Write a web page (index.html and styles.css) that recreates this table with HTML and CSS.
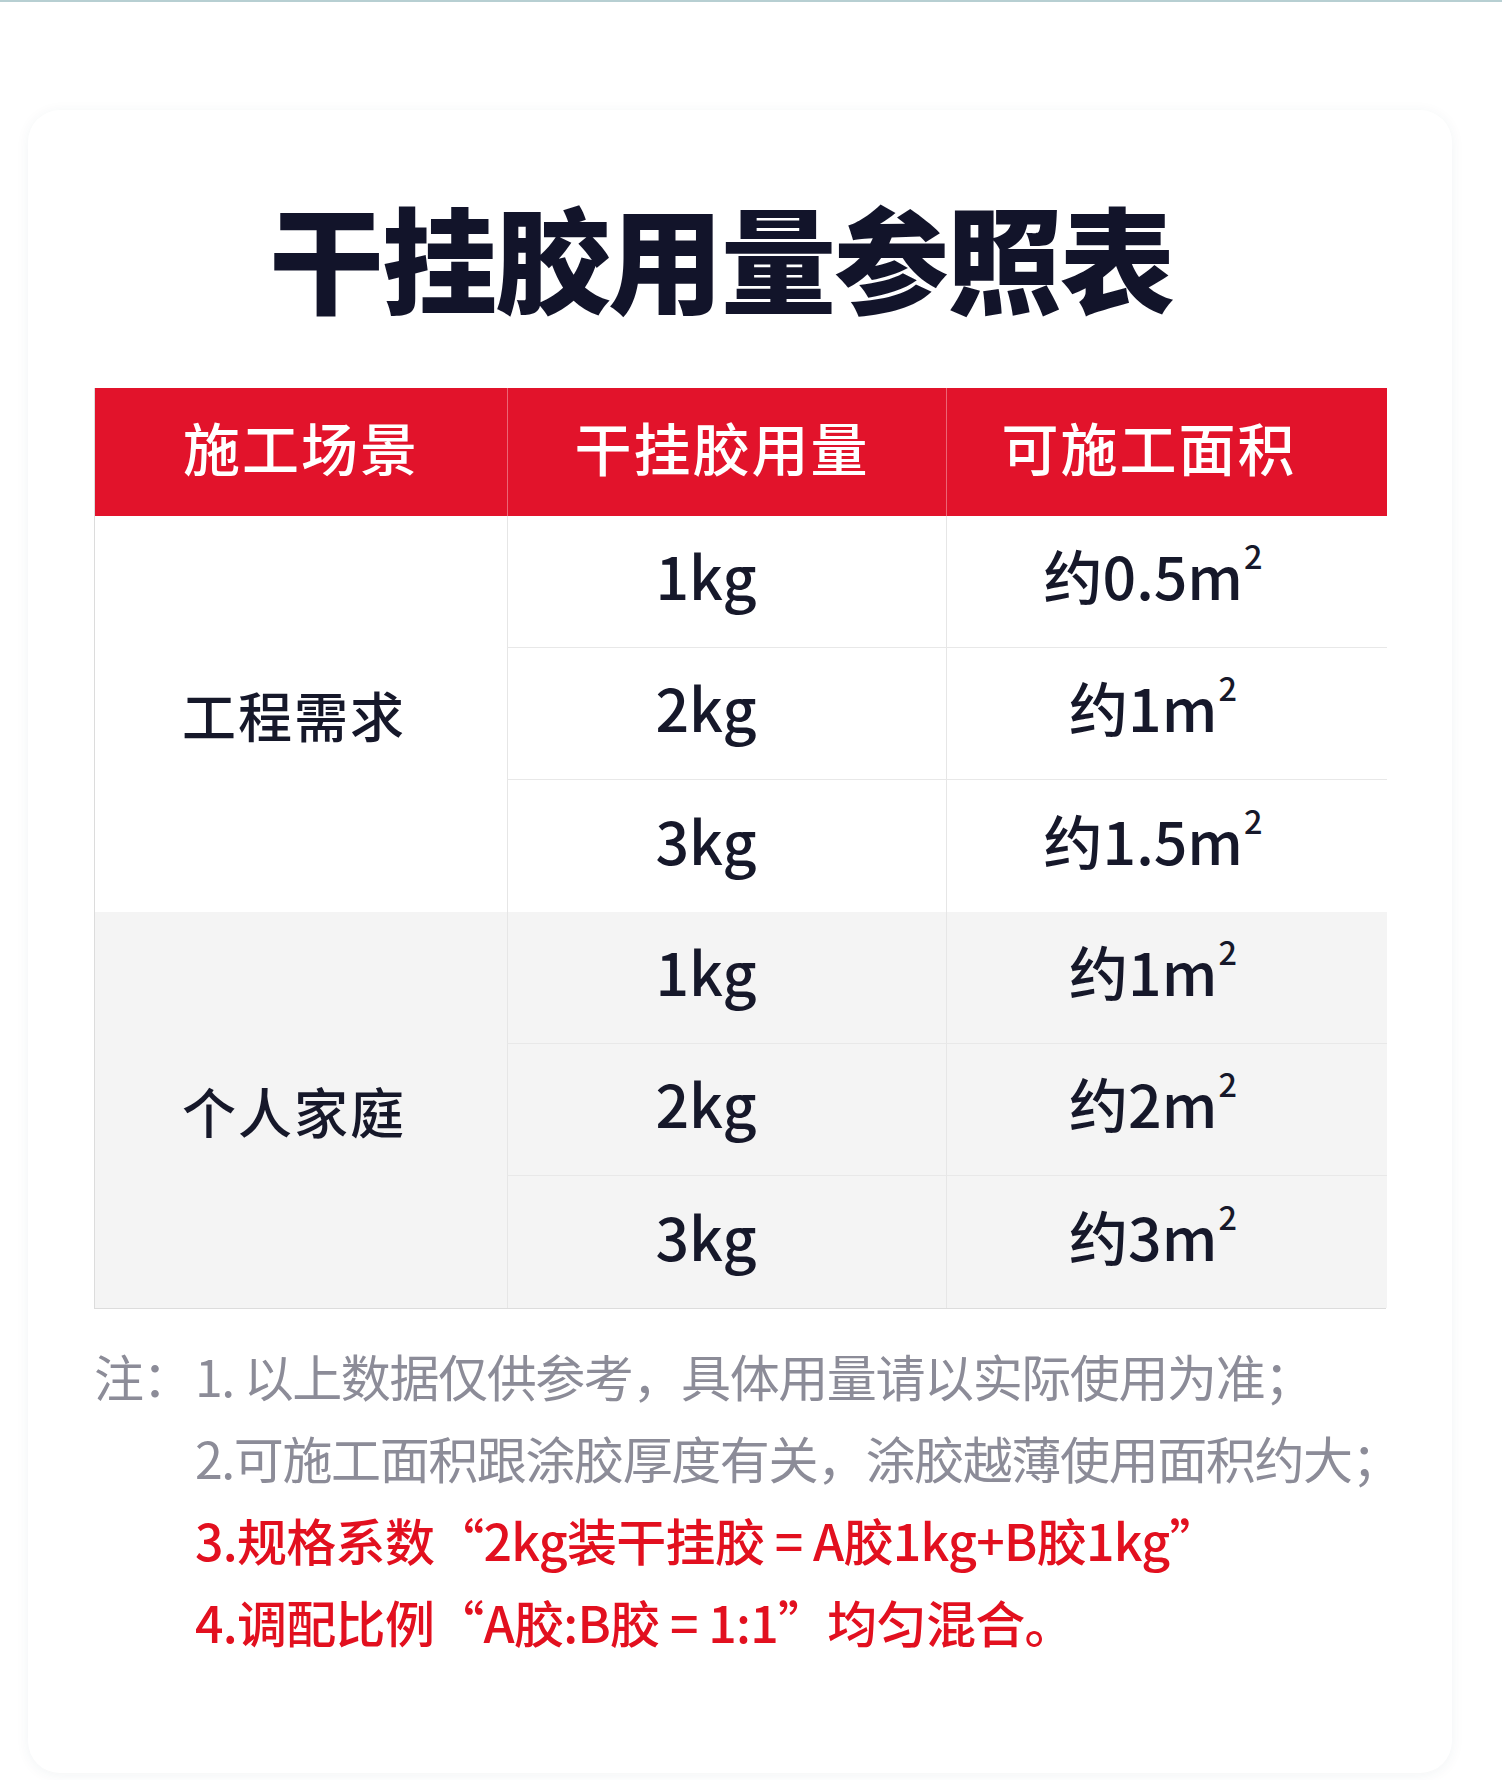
FILE: index.html
```html
<!DOCTYPE html>
<html lang="zh-CN">
<head>
<meta charset="utf-8">
<title>干挂胶用量参照表</title>
<link rel="stylesheet" href="styles.css">
</head>
<body>
<div class="topline"></div>
<div class="page">
  <div class="card">
    <h1 class="title">干挂胶用量参照表</h1>
    <div class="table">
      <div class="th c1">施工场景</div>
      <div class="th c2">干挂胶用量</div>
      <div class="th c3">可施工面积</div>

      <div class="td scene g1 span3">工程需求</div>
      <div class="td g1 val"><span>1kg</span></div>
      <div class="td g1 val area"><span>约0.5m<sup>2</sup></span></div>
      <div class="td g1 val"><span>2kg</span></div>
      <div class="td g1 val area"><span>约1m<sup>2</sup></span></div>
      <div class="td g1 val last"><span>3kg</span></div>
      <div class="td g1 val area last"><span>约1.5m<sup>2</sup></span></div>

      <div class="td scene g2 span3">个人家庭</div>
      <div class="td g2 val"><span>1kg</span></div>
      <div class="td g2 val area"><span>约1m<sup>2</sup></span></div>
      <div class="td g2 val"><span>2kg</span></div>
      <div class="td g2 val area"><span>约2m<sup>2</sup></span></div>
      <div class="td g2 val last"><span>3kg</span></div>
      <div class="td g2 val area last"><span>约3m<sup>2</sup></span></div>
    </div>
    <div class="notes">
      <div class="note-label">注：</div>
      <div class="note-lines">
        <div class="note gray">1. 以上数据仅供参考，具体用量请以实际使用为准；</div>
        <div class="note gray">2.可施工面积跟涂胶厚度有关，涂胶越薄使用面积约大；</div>
        <div class="note red">3.规格系数“2kg装干挂胶 = A胶1kg+B胶1kg”</div>
        <div class="note red">4.调配比例“A胶:B胶 = 1:1”均匀混合。</div>
      </div>
    </div>
  </div>
</div>
</body>
</html>
```

FILE: styles.css
```css
html, body {
  margin: 0;
  padding: 0;
}
body {
  width: 1502px;
  height: 1780px;
  background: #ffffff;
  font-family: "Noto Sans CJK SC", "Noto Sans", sans-serif;
  overflow: hidden;
}
.topline {
  height: 2px;
  background: #b7cfd2;
}
.page {
  padding: 108px 50px 0 28px;
}
.card {
  height: 1663px;
  box-sizing: border-box;
  background: #ffffff;
  border-radius: 32px;
  box-shadow: 0 2px 14px rgba(40, 60, 90, 0.06);
  padding: 88px 66px 0 66px;
}
.title {
  margin: 0;
  padding-right: 38px;
  text-align: center;
  font-size: 115px;
  line-height: 115px;
  font-weight: 900;
  letter-spacing: -2px;
  color: #12142a;
}
.table {
  margin-top: 75px;
  display: grid;
  grid-template-columns: 412px 439px 441px;
  grid-template-rows: 128px repeat(6, 132px);
  border-left: 1px solid #dcdcdc;
  border-bottom: 1px solid #dcdcdc;
}
.th {
  background: #e2132b;
  color: #ffffff;
  font-size: 57px;
  font-weight: 500;
  letter-spacing: 2px;
  display: flex;
  align-items: center;
  justify-content: center;
  padding-bottom: 12px;
  box-sizing: border-box;
  border-left: 1px solid rgba(255, 255, 255, 0.35);
}
.th.c1 {
  border-left: none;
}
.th.c2 {
  padding-right: 10px;
}
.th.c3 {
  padding-right: 36px;
}
.td {
  display: flex;
  align-items: center;
  justify-content: center;
  box-sizing: border-box;
  color: #16182a;
  border-left: 1px solid #e6e6e6;
}
.scene {
  border-left: none;
  font-size: 54px;
  font-weight: 500;
  letter-spacing: 2px;
  padding-right: 14px;
}
.span3 {
  grid-row: span 3;
}
.g1 {
  background: #ffffff;
}
.g2 {
  background: #f4f4f4;
}
.val {
  font-size: 59px;
  font-weight: 500;
  border-bottom: 1px solid #e8e8e8;
  padding-right: 42px;
  padding-bottom: 14px;
}
.val.area {
  padding-right: 28px;
}
.val.last {
  border-bottom: none;
}
.val sup {
  font-size: 0.55em;
  line-height: 0;
  vertical-align: 0.95em;
  margin-left: 1px;
}
.notes {
  margin-top: 25px;
  display: flex;
  font-size: 50px;
  line-height: 82px;
  letter-spacing: -1.4px;
}
.note-label {
  width: 101px;
  color: #8c8c98;
  flex: none;
}
.note {
  white-space: nowrap;
}
.gray {
  color: #8c8c98;
}
.red {
  color: #e2101f;
  font-weight: 500;
  letter-spacing: -0.7px;
}
```
